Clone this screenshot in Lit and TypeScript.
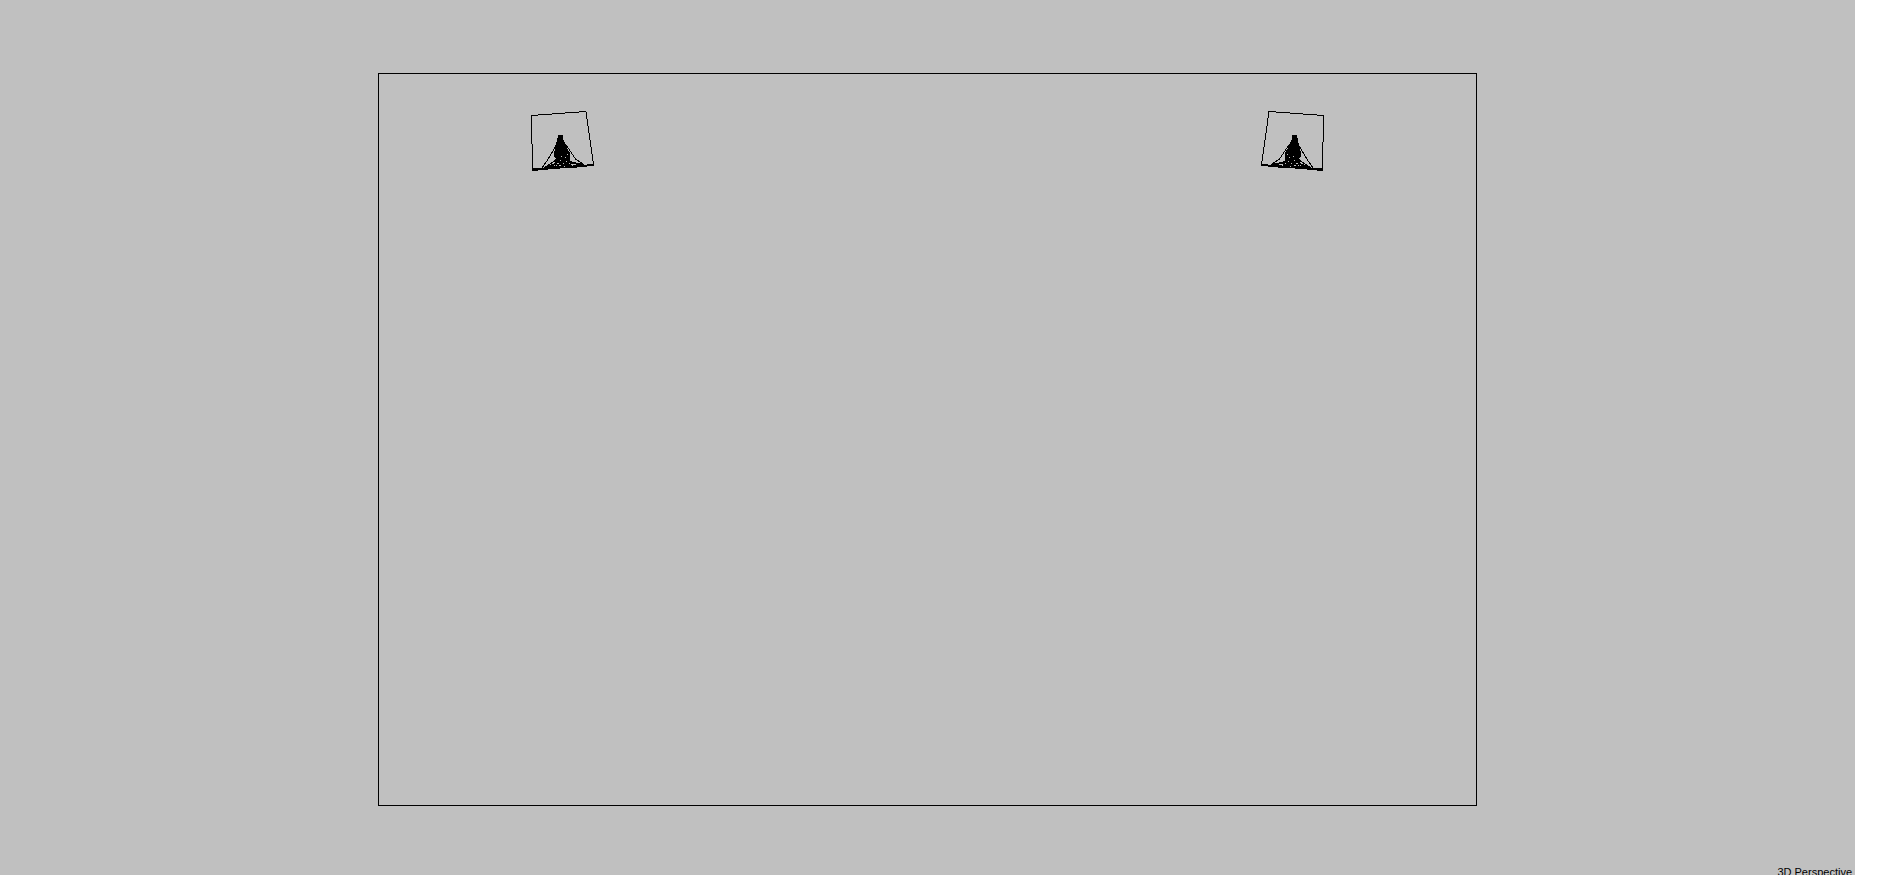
import { LitElement, html, svg, css } from "lit";
import { customElement } from "lit/decorators.js";

// One wireframe tower inside its tilted bounding face.
const tower = (transform: string) => svg`
  <g transform=${transform}>
    <path class="line" d="M531.5 115.5L586 111.5L593.5 164.5L532.5 170.5Z" />
    <path class="thick" d="M532.5 169.5L594 165" />
    <path class="solid" d="M558 135h5v4l2 4 2 5 3 5v7l2 6-17 2v-9l-1-4 1-8 2-6z" />
    <path class="line" d="M557.5 143L553.5 150L547.5 160L541.5 168.5M564.5 143L569.5 150L575.5 159L585 165.5" />
    <path class="line" d="M544 168L556 160L568 160L580 166" />
    <path class="thick" d="M545 168L555 164M569 162L583 165M551 167H577" />
    <path class="hole" d="M555 158.5h1M557 163.5h2M560 160.5h1M563 163.5h1M559 165.5h2M566 161.5h1M565 157.5h1M569 163.5h1M556 165.5h1M564 166.5h1M561 156.5h1M567 154.5h1" />
  </g>`;

@customElement("app-root")
export class AppRoot extends LitElement {
  static styles = css`
    :host {
      display: block;
      height: 100vh;
      overflow: hidden;
      background: #fff;
    }
    .viewport {
      display: grid;
      height: 100%;
      margin-right: 37px;
      background: #c0c0c0;
      color: #000;
      font: 11px/14px "Liberation Sans", Arial, sans-serif;
    }
    .scene {
      grid-area: 1 / 1;
      width: 100%;
      height: 100%;
      min-height: 0;
      shape-rendering: crispEdges;
    }
    .line,
    .thick,
    .hole {
      fill: none;
      stroke: #000;
      stroke-width: 1;
    }
    .thick {
      stroke-width: 2;
    }
    .hole {
      stroke: #c0c0c0;
    }
    .solid {
      fill: #000;
    }
    .label {
      grid-area: 1 / 1;
      place-self: end;
      margin: 0 3px -4px 0;
      white-space: nowrap;
    }
  `;

  render() {
    return html`
      <main class="viewport">
        <svg class="scene" viewBox="0 0 1855 875" role="img" aria-label="Wireframe scene">
          <rect class="line" x="378.5" y="73.5" width="1098" height="732" />
          ${tower("")} ${tower("translate(1855 0) scale(-1 1)")}
        </svg>
        <span class="label">3D Perspective</span>
      </main>
    `;
  }
}
